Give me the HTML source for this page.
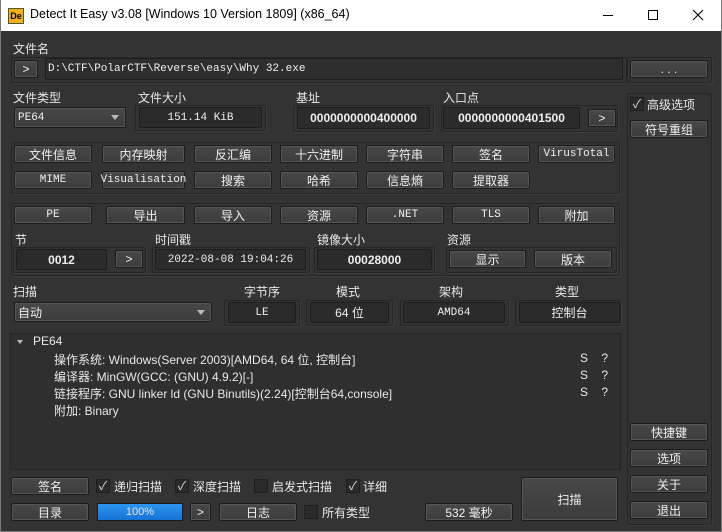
<!DOCTYPE html><html><head><meta charset="utf-8"><style>
*{box-sizing:border-box;margin:0;padding:0}
body{width:722px;height:532px;background:#7a7a7a;font-family:"Liberation Sans","Noto Sans CJK SC",sans-serif;font-size:12px;color:#e6e6e6;position:relative;overflow:hidden}
#tb{position:absolute;left:1px;top:0;width:720px;height:31px;background:#fff;color:#000}
#main{position:absolute;left:1px;top:31px;width:720px;height:500px;background:#333}
.a{position:absolute}
.l{position:absolute;font-size:12px;color:#e8e8e8;white-space:nowrap}
.b{position:absolute;background:linear-gradient(#484848,#3c3c3c);border:1px solid #1c1c1c;box-shadow:inset 0 0 0 1px #555;border-radius:2px;text-align:center;color:#f0f0f0;display:flex;align-items:center;justify-content:center;white-space:nowrap}
.f{position:absolute;background:#2b2b2b;border:1px solid #1d1d1d;border-radius:2px;color:#eee;display:flex;align-items:center;justify-content:center;white-space:nowrap}
.g{position:absolute;border:1px solid #262626;box-shadow:1px 1px 0 #3c3c3c;border-radius:2px}
.m{font-family:"Liberation Mono","Noto Sans CJK SC",monospace;font-size:11px}
.bd{font-weight:bold}
.cb{position:absolute;width:14px;height:14px;background:#2a2a2a;border:1px solid #1e1e1e;color:#ddd;font-size:12px;line-height:13px;text-align:center}
</style></head><body>
<div id="tb">
<div class="a" style="left:7px;top:8px;width:16px;height:16px;background:#f0b020;border:1px solid #553;color:#000;font:bold 9px 'Liberation Sans';line-height:14px;text-align:center">De</div>
<div class="a" style="left:29px;top:7px;font-size:12.5px">Detect It Easy v3.08 [Windows 10 Version 1809] (x86_64)</div>
<div class="a" style="left:602px;top:15px;width:10px;height:1px;background:#000"></div>
<div class="a" style="left:647px;top:10px;width:10px;height:10px;border:1px solid #000"></div>
<svg class="a" style="left:691px;top:9px" width="12" height="12"><path d="M1 1L11 11M11 1L1 11" stroke="#000" stroke-width="1.1"/></svg>
</div>
<div id="main">
<div style="position:absolute;left:-1px;top:-31px;width:722px;height:532px">
<div class="l" style="left:13px;top:40px">文件名</div>
<div class="g" style="left:11px;top:57px;width:616px;height:26px"></div>
<div class="b" style="left:14px;top:60px;width:24px;height:18px">&gt;</div>
<div class="f m" style="left:45px;top:58px;width:578px;height:22px;justify-content:flex-start;padding-left:2px;background:#2e2e2e">D:\CTF\PolarCTF\Reverse\easy\Why 32.exe</div>
<div class="g" style="left:627px;top:57px;width:85px;height:26px"></div>
<div class="b" style="left:630px;top:60px;width:78px;height:18px">. . .</div>

<div class="l" style="left:13px;top:89px">文件类型</div>
<div class="l" style="left:138px;top:89px">文件大小</div>
<div class="l" style="left:296px;top:89px">基址</div>
<div class="l" style="left:443px;top:89px">入口点</div>
<div class="b m" style="left:14px;top:107px;width:112px;height:21px;justify-content:flex-start;padding-left:3px">PE64<span style="position:absolute;right:6px;top:7px;border:4px solid transparent;border-top:5px solid #bbb"></span></div>
<div class="g" style="left:135px;top:105px;width:131px;height:26px"></div>
<div class="f m" style="left:139px;top:107px;width:123px;height:21px">151.14 KiB</div>
<div class="g" style="left:293px;top:105px;width:141px;height:27px"></div>
<div class="f bd" style="left:297px;top:107px;width:133px;height:22px">0000000000400000</div>
<div class="g" style="left:441px;top:105px;width:177px;height:27px"></div>
<div class="f bd" style="left:443px;top:107px;width:137px;height:22px">0000000000401500</div>
<div class="b" style="left:588px;top:109px;width:28px;height:18px">&gt;</div>

<div class="g" style="left:627px;top:93px;width:85px;height:432px"></div>
<div class="cb" style="left:630px;top:97px">✓</div>
<div class="l" style="left:647px;top:96px">高级选项</div>
<div class="b" style="left:630px;top:120px;width:78px;height:18px">符号重组</div>

<div class="g" style="left:11px;top:142px;width:609px;height:52px"></div>
<div class="b" style="left:14px;top:145px;width:78px;height:18px">文件信息</div>
<div class="b" style="left:102px;top:145px;width:83px;height:18px">内存映射</div>
<div class="b" style="left:194px;top:145px;width:78px;height:18px">反汇编</div>
<div class="b" style="left:280px;top:145px;width:78px;height:18px">十六进制</div>
<div class="b" style="left:366px;top:145px;width:78px;height:18px">字符串</div>
<div class="b" style="left:452px;top:145px;width:78px;height:18px">签名</div>
<div class="b m" style="left:538px;top:145px;width:77px;height:18px">VirusTotal</div>
<div class="b m" style="left:14px;top:171px;width:78px;height:18px">MIME</div>
<div class="b m" style="left:102px;top:171px;width:83px;height:18px">Visualisation</div>
<div class="b" style="left:194px;top:171px;width:78px;height:18px">搜索</div>
<div class="b" style="left:280px;top:171px;width:78px;height:18px">哈希</div>
<div class="b" style="left:366px;top:171px;width:78px;height:18px">信息熵</div>
<div class="b" style="left:452px;top:171px;width:78px;height:18px">提取器</div>

<div class="g" style="left:11px;top:203px;width:609px;height:73px"></div>
<div class="b m" style="left:14px;top:206px;width:78px;height:18px">PE</div>
<div class="b" style="left:106px;top:206px;width:79px;height:18px">导出</div>
<div class="b" style="left:194px;top:206px;width:78px;height:18px">导入</div>
<div class="b" style="left:280px;top:206px;width:78px;height:18px">资源</div>
<div class="b m" style="left:366px;top:206px;width:78px;height:18px">.NET</div>
<div class="b m" style="left:452px;top:206px;width:78px;height:18px">TLS</div>
<div class="b" style="left:538px;top:206px;width:77px;height:18px">附加</div>
<div class="l" style="left:15px;top:231px">节</div>
<div class="l" style="left:155px;top:231px">时间戳</div>
<div class="l" style="left:317px;top:231px">镜像大小</div>
<div class="l" style="left:447px;top:231px">资源</div>
<div class="g" style="left:13px;top:247px;width:133px;height:26px"></div>
<div class="f bd" style="left:16px;top:249px;width:91px;height:21px">0012</div>
<div class="b" style="left:115px;top:250px;width:28px;height:18px">&gt;</div>
<div class="g" style="left:152px;top:247px;width:158px;height:26px"></div>
<div class="f m" style="left:155px;top:249px;width:151px;height:21px">2022-08-08 19:04:26</div>
<div class="g" style="left:314px;top:247px;width:121px;height:26px"></div>
<div class="f bd" style="left:317px;top:249px;width:115px;height:21px">00028000</div>
<div class="g" style="left:446px;top:247px;width:171px;height:26px"></div>
<div class="b" style="left:449px;top:250px;width:77px;height:18px">显示</div>
<div class="b" style="left:534px;top:250px;width:78px;height:18px">版本</div>

<div class="l" style="left:13px;top:283px">扫描</div>
<div class="l" style="left:244px;top:283px">字节序</div>
<div class="l" style="left:336px;top:283px">模式</div>
<div class="l" style="left:439px;top:283px">架构</div>
<div class="l" style="left:555px;top:283px">类型</div>
<div class="b" style="left:14px;top:302px;width:198px;height:20px;justify-content:flex-start;padding-left:3px">自动<span style="position:absolute;right:6px;top:7px;border:4px solid transparent;border-top:5px solid #bbb"></span></div>
<div class="g" style="left:224px;top:300px;width:76px;height:26px"></div>
<div class="f m" style="left:228px;top:302px;width:68px;height:21px">LE</div>
<div class="g" style="left:306px;top:300px;width:87px;height:26px"></div>
<div class="f" style="left:310px;top:302px;width:79px;height:21px">64 位</div>
<div class="g" style="left:400px;top:300px;width:109px;height:26px"></div>
<div class="f m" style="left:403px;top:302px;width:102px;height:21px">AMD64</div>
<div class="g" style="left:515px;top:300px;width:106px;height:26px"></div>
<div class="f" style="left:519px;top:302px;width:101px;height:21px">控制台</div>

<div class="a" style="left:10px;top:333px;width:611px;height:137px;background:#2f2f2f;border:1px solid #252525"></div>
<div class="a" style="left:17px;top:340px;border:3.5px solid transparent;border-top:4px solid #bbb"></div>
<div class="l" style="left:33px;top:334px">PE64</div>
<div class="l" style="left:54px;top:351px">操作系统: Windows(Server 2003)[AMD64, 64 位, 控制台]</div>
<div class="l" style="left:54px;top:368px">编译器: MinGW(GCC: (GNU) 4.9.2)[-]</div>
<div class="l" style="left:54px;top:385px">链接程序: GNU linker ld (GNU Binutils)(2.24)[控制台64,console]</div>
<div class="l" style="left:54px;top:402px">附加: Binary</div>
<div class="l" style="left:580px;top:351px">S&nbsp;&nbsp;&nbsp;&nbsp;?</div>
<div class="l" style="left:580px;top:368px">S&nbsp;&nbsp;&nbsp;&nbsp;?</div>
<div class="l" style="left:580px;top:385px">S&nbsp;&nbsp;&nbsp;&nbsp;?</div>

<div class="b" style="left:630px;top:423px;width:78px;height:18px">快捷键</div>
<div class="b" style="left:630px;top:449px;width:78px;height:18px">选项</div>
<div class="b" style="left:630px;top:475px;width:78px;height:18px">关于</div>
<div class="b" style="left:630px;top:501px;width:78px;height:18px">退出</div>

<div class="b" style="left:11px;top:477px;width:78px;height:18px">签名</div>
<div class="cb" style="left:96px;top:479px">✓</div><div class="l" style="left:114px;top:478px">递归扫描</div>
<div class="cb" style="left:175px;top:479px">✓</div><div class="l" style="left:193px;top:478px">深度扫描</div>
<div class="cb" style="left:254px;top:479px"></div><div class="l" style="left:272px;top:478px">启发式扫描</div>
<div class="cb" style="left:346px;top:479px">✓</div><div class="l" style="left:363px;top:478px">详细</div>
<div class="b" style="left:11px;top:503px;width:78px;height:18px">目录</div>
<div class="a" style="left:97px;top:503px;width:86px;height:18px;background:linear-gradient(#2d95f0,#1673d6);border:1px solid #1a1a1a;text-align:center;line-height:16px;font-size:11px">100%</div>
<div class="b" style="left:190px;top:503px;width:21px;height:18px">&gt;</div>
<div class="b" style="left:219px;top:503px;width:78px;height:18px">日志</div>
<div class="cb" style="left:304px;top:505px"></div><div class="l" style="left:322px;top:504px">所有类型</div>
<div class="b" style="left:425px;top:503px;width:88px;height:18px">532 毫秒</div>
<div class="b" style="left:521px;top:477px;width:97px;height:44px">扫描</div>
</div></div>
</body></html>
